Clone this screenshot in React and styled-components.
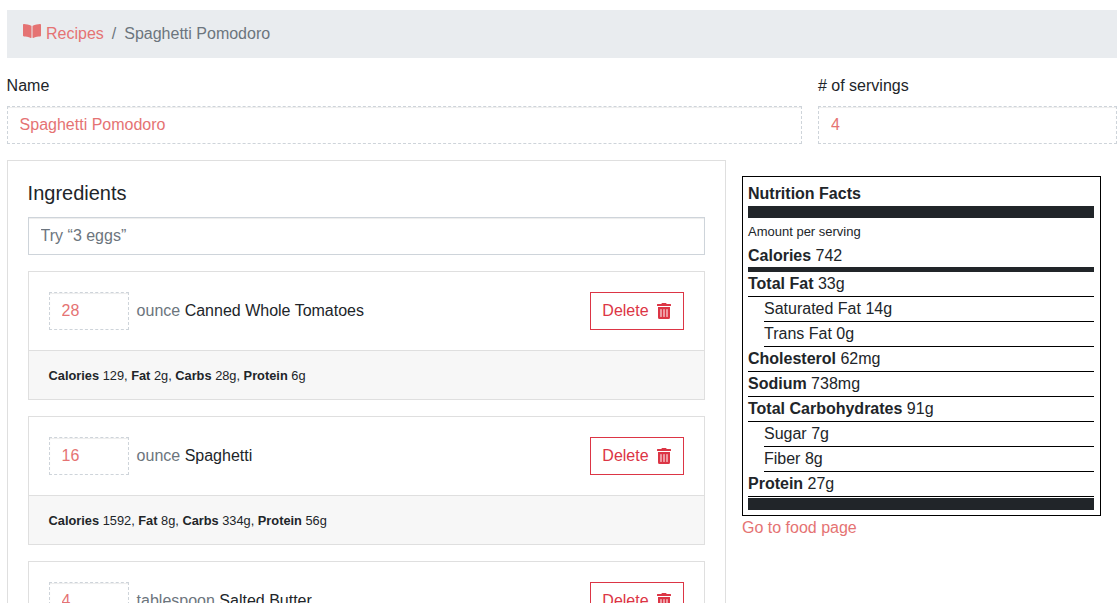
import React from 'react';
import styled, { createGlobalStyle } from 'styled-components';
import { FaBookOpen, FaTrashAlt } from 'react-icons/fa';

const accent = '#e57373';
const danger = '#dc3545';
const ink = '#212529';
const muted = '#6c757d';
const insetShadow = 'inset 0 1px 1px rgba(0, 0, 0, 0.075)';

const GlobalStyle = createGlobalStyle`
  html, body {
    margin: 0;
    height: 100%;
    overflow: hidden;
    background: #fff;
  }
  body {
    font-family: "Liberation Sans", Arial, sans-serif;
    font-size: 16px;
    line-height: 24px;
    color: ${ink};
  }
  * {
    box-sizing: border-box;
  }
`;

const Page = styled.div`
  padding: 10px 0 0 6.6px;
`;

const Breadcrumb = styled.nav`
  display: flex;
  align-items: center;
  height: 48px;
  padding: 0 16px;
  margin-bottom: 16px;
  background: #e9ecef;
  color: ${muted};
`;

const CrumbLink = styled.a`
  display: inline-flex;
  align-items: center;
  color: ${accent};
  text-decoration: none;

  svg {
    width: 18px;
    height: 16px;
    margin-right: 5.4px;
    position: relative;
    top: -3px;
  }
`;

const CrumbDivider = styled.span`
  padding: 0 8px;
`;

const FieldRow = styled.div`
  display: grid;
  grid-template-columns: 795.4px 299px;
  gap: 16px;
  margin-bottom: 16px;
`;

const Field = styled.label`
  display: block;
`;

const FieldLabel = styled.div`
  margin-bottom: 8px;
`;

const DashedInput = styled.input`
  display: block;
  width: ${(p) => p.$width || '100%'};
  height: 38px;
  padding: 6px 12px;
  border: 1px dashed #ced4da;
  border-radius: 0;
  outline: none;
  background: #fff;
  box-shadow: ${insetShadow};
  color: ${accent};
  font: inherit;
`;

const Columns = styled.div`
  display: grid;
  grid-template-columns: 719px 359px;
  column-gap: 16.4px;
  align-items: start;
`;

const Panel = styled.section`
  padding: 20px;
  border: 1px solid #dfdfdf;
`;

const PanelTitle = styled.h5`
  margin: 0 0 12px;
  font-size: 20px;
  font-weight: 400;
  line-height: 24px;
`;

const SearchInput = styled.input`
  display: block;
  width: 100%;
  height: 38px;
  padding: 6px 12px;
  margin-bottom: 16px;
  border: 1px solid #ced4da;
  border-radius: 0;
  outline: none;
  box-shadow: ${insetShadow};
  color: ${ink};
  font: inherit;

  &::placeholder {
    color: ${muted};
    opacity: 1;
  }
`;

const IngredientCard = styled.article`
  margin-bottom: 16px;
  border: 1px solid #dfdfdf;
`;

const IngredientBody = styled.div`
  display: flex;
  align-items: center;
  padding: 20px;
`;

const IngredientName = styled.div`
  flex: 1;
  margin-left: 8px;
`;

const Unit = styled.span`
  color: ${muted};
`;

const DeleteButton = styled.button`
  display: flex;
  align-items: center;
  height: 38px;
  padding: 0 12px 0 11.7px;
  border: 1px solid ${danger};
  border-radius: 0;
  background: #fff;
  color: ${danger};
  font: inherit;

  svg {
    width: 14px;
    height: 16px;
    margin-left: 8px;
  }
`;

const IngredientFooter = styled.div`
  height: 49px;
  padding: 12px 20px;
  border-top: 1px solid #dfdfdf;
  background: #f7f7f7;
  font-size: 12.8px;
  line-height: 25px;
`;

const NutritionColumn = styled.aside`
  padding-top: 16px;
`;

const NutritionBox = styled.div`
  padding: 5px 6px 5px 5px;
  border: 1px solid #000;
`;

const NutritionTitle = styled.div`
  height: 24px;
  line-height: 24px;
  font-weight: 700;
`;

const ThickBar = styled.div`
  height: ${(p) => p.$height}px;
  margin-top: ${(p) => p.$top || 0}px;
  background: ${ink};
`;

const AmountLine = styled.div`
  margin-top: 2px;
  font-size: 13px;
  line-height: 24px;
`;

const CaloriesRow = styled.div`
  height: 23px;
`;

const NutritionRow = styled.div`
  height: 25px;
  margin-left: ${(p) => (p.$indent ? '16px' : '0')};
  border-bottom: 1px solid #000;
`;

const FoodLink = styled.a`
  color: ${accent};
  text-decoration: none;
`;

const ingredients = [
  {
    amount: 28,
    unit: 'ounce',
    name: 'Canned Whole Tomatoes',
    calories: 129,
    fat: '2g',
    carbs: '28g',
    protein: '6g',
  },
  {
    amount: 16,
    unit: 'ounce',
    name: 'Spaghetti',
    calories: 1592,
    fat: '8g',
    carbs: '334g',
    protein: '56g',
  },
  { amount: 4, unit: 'tablespoon', name: 'Salted Butter' },
];

const nutrients = [
  { label: 'Total Fat', value: '33g' },
  { label: 'Saturated Fat', value: '14g', indent: true },
  { label: 'Trans Fat', value: '0g', indent: true },
  { label: 'Cholesterol', value: '62mg' },
  { label: 'Sodium', value: '738mg' },
  { label: 'Total Carbohydrates', value: '91g' },
  { label: 'Sugar', value: '7g', indent: true },
  { label: 'Fiber', value: '8g', indent: true },
  { label: 'Protein', value: '27g' },
];

const Ingredient = ({ item }) => (
  <IngredientCard>
    <IngredientBody>
      <DashedInput $width="80px" defaultValue={item.amount} />
      <IngredientName>
        <Unit>{item.unit}</Unit> {item.name}
      </IngredientName>
      <DeleteButton>
        Delete
        <FaTrashAlt />
      </DeleteButton>
    </IngredientBody>
    {item.calories && (
      <IngredientFooter>
        <b>Calories</b> {item.calories}, <b>Fat</b> {item.fat}, <b>Carbs</b> {item.carbs},{' '}
        <b>Protein</b> {item.protein}
      </IngredientFooter>
    )}
  </IngredientCard>
);

const App = () => (
  <Page>
    <GlobalStyle />
    <Breadcrumb>
      <CrumbLink href="#">
        <FaBookOpen />
        Recipes
      </CrumbLink>
      <CrumbDivider>/</CrumbDivider>
      Spaghetti Pomodoro
    </Breadcrumb>

    <FieldRow>
      <Field>
        <FieldLabel>Name</FieldLabel>
        <DashedInput defaultValue="Spaghetti Pomodoro" />
      </Field>
      <Field>
        <FieldLabel># of servings</FieldLabel>
        <DashedInput defaultValue="4" />
      </Field>
    </FieldRow>

    <Columns>
      <Panel>
        <PanelTitle>Ingredients</PanelTitle>
        <SearchInput placeholder="Try “3 eggs”" />
        {ingredients.map((item) => (
          <Ingredient key={item.name} item={item} />
        ))}
      </Panel>

      <NutritionColumn>
        <NutritionBox>
          <NutritionTitle>Nutrition Facts</NutritionTitle>
          <ThickBar $height={12} />
          <AmountLine>Amount per serving</AmountLine>
          <CaloriesRow>
            <b>Calories</b> 742
          </CaloriesRow>
          <ThickBar $height={5} />
          {nutrients.map((n) => (
            <NutritionRow key={n.label} $indent={n.indent}>
              {n.indent ? n.label : <b>{n.label}</b>} {n.value}
            </NutritionRow>
          ))}
          <ThickBar $height={12} $top={1} />
        </NutritionBox>
        <FoodLink href="#">Go to food page</FoodLink>
      </NutritionColumn>
    </Columns>
  </Page>
);

export default App;
